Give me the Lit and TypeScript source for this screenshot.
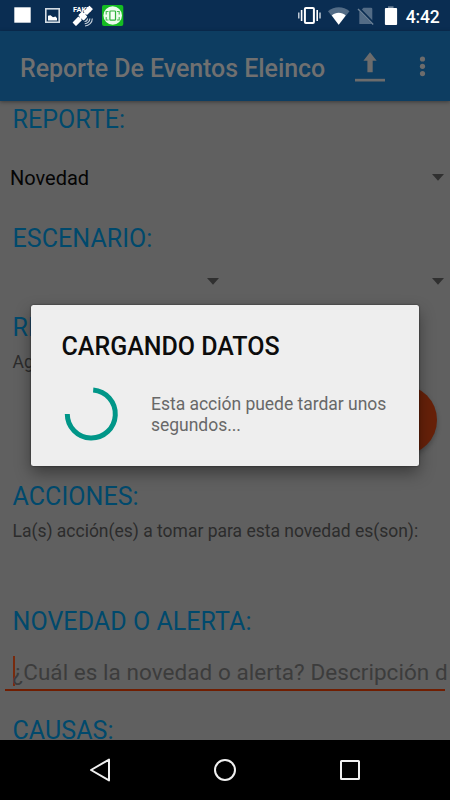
import { LitElement, html, css } from "lit";
import { customElement, property } from "lit/decorators.js";

@customElement("status-bar")
class StatusBar extends LitElement {
  static styles = css`
    :host { display: block; height: 31px; flex: none; background: #0a2d52; }
    .icons { display: block; width: 450px; height: 31px; }
    .fake { font: 700 7px Roboto, sans-serif; fill: #fff; }
    .clock { font: 500 17.5px Roboto, sans-serif; fill: #fff; }
  `;
  render() {
    return html`<svg class="icons" viewBox="0 0 450 31">
      <rect x="14.3" y="7.3" width="16.4" height="15.4" fill="#fff" />
      <rect x="45.8" y="8.8" width="13.4" height="13.4" fill="none" stroke="#d3dbe3" stroke-width="1.6" />
      <path d="M48 20.500V15.800l2.500-.6 2.500 2 2.500-.7 1.500 1.700v2.300z" fill="#fff" />
      <g transform="translate(82.700 15.800) rotate(-45)" fill="#fff">
        <rect x="-12" y="-2.500" width="8.500" height="5" rx=".5" />
        <rect x="-4" y="-1" width="8" height="2" />
        <rect x="-2.800" y="-3.600" width="5.600" height="7.600" rx="1" />
        <rect x="3.500" y="-2.500" width="8.500" height="5" rx=".5" />
      </g>
      <text class="fake" x="73" y="11.500" textLength="17.500" lengthAdjust="spacingAndGlyphs">FAKE</text>
      <path d="M84.500 21.500a3 3 0 0 0 3-3M84.700 23.700a5.300 5.300 0 0 0 5.200-5.200M85 26a7.500 7.500 0 0 0 7.300-7.500" fill="none" stroke="#c8d2dc" stroke-width="1.100" />
      <rect x="102" y="5" width="21.300" height="21" rx="2" fill="#15bd22" />
      <circle cx="112.700" cy="15.500" r="9.300" fill="#eafbeb" />
      <rect x="109.900" y="11" width="5.600" height="9.200" rx=".8" fill="#f5fff5" stroke="#2fb23b" stroke-width="1.200" />
      <path d="M106.200 14.500v-3h2.300M106.200 17v3h2.300M119.200 14.500v-3h-2.300M119.200 17v3h-2.300" fill="none" stroke="#45bd50" stroke-width="1.100" />
      <rect x="304.900" y="8.100" width="9" height="15" rx="1" fill="none" stroke="#fff" stroke-width="2" />
      <path d="M301.600 10v11M317.200 10v11" stroke="#fff" stroke-width="1.600" />
      <path d="M298.800 12.500v6M320 12.500v6" stroke="#dde5ec" stroke-width="1.300" />
      <path d="M328 11.200C334 6 343.500 6 349.500 11.200L338.700 24.700z" fill="#536c86" />
      <path d="M331.800 15.500C335.500 11.800 341.900 11.800 345.700 15.500L338.700 24.700z" fill="#fff" />
      <path d="M363.500 7.700H371a1.300 1.300 0 0 1 1.300 1.300v15h-13V12z" fill="#536c86" />
      <path d="M358.800 8.500l15 15.500" stroke="#0a2d52" stroke-width="3.200" />
      <path d="M358 9l15.200 15.500" stroke="#6d8297" stroke-width="1.400" />
      <path d="M388 6.300h5.500v2h-5.500z" fill="#70859a" />
      <rect x="384.900" y="8" width="12.200" height="17" rx="1" fill="#fff" />
      <text class="clock" x="405.800" y="22.500" textLength="34">4:42</text>
    </svg>`;
  }
}

@customElement("app-bar")
class AppBar extends LitElement {
  static styles = css`
    :host { display: flex; align-items: center; height: 70px; flex: none; box-sizing: border-box;
      padding-left: 20px; background: #0d3d61; color: #707070; position: relative;
      box-shadow: 0 1px 4px rgba(0, 0, 0, .4); font: 500 25px/30px Roboto, sans-serif; }
    .title { width: 335px; padding-top: 5px; white-space: nowrap; letter-spacing: -.06px; }
    .actions { width: 95px; height: 70px; }
  `;
  render() {
    return html`<div class="title">Reporte De Eventos Eleinco</div>
      <svg class="actions" viewBox="355 31 95 70" fill="#6c6c6c">
        <path d="M370 52.300l6.700 8.500h-4v11.500h-5.300V60.800h-4z" />
        <rect x="355" y="78.800" width="30" height="2.700" />
        <circle cx="422.500" cy="59" r="2.600" />
        <circle cx="422.500" cy="66.300" r="2.600" />
        <circle cx="422.500" cy="73.600" r="2.600" />
      </svg>`;
  }
}

@customElement("spinner-field")
class SpinnerField extends LitElement {
  @property() value = "";
  static styles = css`
    :host { display: flex; flex: 1; align-items: center; justify-content: space-between;
      box-sizing: border-box; padding: 0 6.500px 0 10px; color: #050505; font: 20px/24px Roboto, sans-serif; }
    .arrow { width: 12px; height: 7px; margin-bottom: 2px; fill: #303030; }
  `;
  render() {
    return html`<span>${this.value}</span>
      <svg class="arrow" viewBox="0.5 0 12 7"><path d="M0.500 0h12L6.500 6.700z" /></svg>`;
  }
}

@customElement("loading-dialog")
class LoadingDialog extends LitElement {
  static styles = css`
    :host { display: block; box-sizing: border-box; width: 388px; height: 161px; padding: 27px 30.500px 0;
      background: #eee; border-radius: 2.500px;
      box-shadow: 0 0 2px rgba(0, 0, 0, .6), 0 7px 16px rgba(0, 0, 0, .38);
      font-family: Roboto, sans-serif; }
    .title { font-size: 25px; line-height: 30px; font-weight: 500; color: #0c0c0c; white-space: nowrap; }
    .body { display: flex; align-items: center; gap: 30px; margin-top: 21.500px; }
    .ring { width: 60px; height: 60px; flex: none; margin-left: -.500px; }
    .message { font-size: 17.500px; line-height: 21px; padding-top: 2px; letter-spacing: -.02px; color: #686868; white-space: nowrap; }
  `;
  render() {
    return html`<div class="title">CARGANDO DATOS</div>
      <div class="body">
        <svg class="ring" viewBox="0 0 60 60" fill="none" stroke="#009688" stroke-width="5">
          <path d="M32.200 6.100A24 24 0 1 1 6.300 30" />
        </svg>
        <div class="message">Esta acción puede tardar unos<br />segundos...</div>
      </div>`;
  }
}

@customElement("nav-bar")
class NavBar extends LitElement {
  static styles = css`
    :host { display: flex; flex: none; height: 60px; background: #000; align-items: center;
      justify-content: space-between; box-sizing: border-box; padding: 0 85px; }
    .key { width: 30px; height: 30px; fill: none; stroke: #f0f0f0; stroke-width: 2; }
  `;
  render() {
    return html`<svg class="key" viewBox="0 0 30 30"><path d="M6 15L24 4.600V25.400z" stroke-linejoin="round" /></svg>
      <svg class="key" viewBox="0 0 30 30"><circle cx="15" cy="15" r="10" /></svg>
      <svg class="key" viewBox="0 0 30 30"><rect x="6" y="6" width="18" height="18" rx=".5" /></svg>`;
  }
}

@customElement("app-root")
class AppRoot extends LitElement {
  static styles = css`
    :host { display: flex; flex-direction: column; position: relative; width: 450px; height: 800px;
      overflow: hidden; background: #606060; font-family: Roboto, sans-serif; }
    .form { flex: 1; min-height: 0; overflow: hidden; display: flex; flex-direction: column; padding-top: 4px; }
    .heading { flex: none; padding-left: 12.500px; font-size: 25px; line-height: 30px; letter-spacing: .06px; color: #00496c; white-space: nowrap; }
    .note { flex: none; padding-left: 12.500px; font-size: 17.500px; line-height: 21px; letter-spacing: -.01px; color: #2c2c2c; white-space: nowrap; }
    .row { display: flex; flex: none; height: 60px; margin: 13px 0 16px; }
    .pair { margin: 0 0 3px; height: 56px; }
    .section { display: flex; flex-direction: column; gap: 9px; height: 169px; flex: none; }
    .actions { height: 125px; }
    .input { flex: none; box-sizing: border-box; margin: 19px 5px 0; height: 35px; border-bottom: 2px solid #701e02;
      padding-left: 8px; display: flex; }
    .caret { flex: none; width: 2px; height: 30px; margin-right: -2.500px; background: #782a0d; }
    .hint { font-size: 22.500px; line-height: 28px; padding-top: 2px; letter-spacing: .05px; color: #3c3c3c; white-space: nowrap; }
    .last { margin-top: 25px; }
    .fab { position: absolute; left: 367px; top: 385px; width: 70px; height: 70px; border-radius: 50%;
      background: #672109; box-shadow: 0 3px 5px rgba(0, 0, 0, .25); }
    .dialog { position: absolute; left: 31px; top: 305px; }
  `;
  render() {
    return html`<status-bar></status-bar>
      <app-bar></app-bar>
      <main class="form">
        <div class="heading">REPORTE:</div>
        <div class="row"><spinner-field value="Novedad"></spinner-field></div>
        <div class="heading">ESCENARIO:</div>
        <div class="row pair"><spinner-field></spinner-field><spinner-field></spinner-field></div>
        <div class="section">
          <div class="heading">RE</div>
          <div class="note">Ag</div>
        </div>
        <div class="section actions">
          <div class="heading">ACCIONES:</div>
          <div class="note">La(s) acción(es) a tomar para esta novedad es(son):</div>
        </div>
        <div class="heading">NOVEDAD O ALERTA:</div>
        <div class="input"><i class="caret"></i><span class="hint">¿Cuál es la novedad o alerta? Descripción d</span></div>
        <div class="heading last">CAUSAS:</div>
      </main>
      <nav-bar></nav-bar>
      <div class="fab"></div>
      <loading-dialog class="dialog"></loading-dialog>`;
  }
}
